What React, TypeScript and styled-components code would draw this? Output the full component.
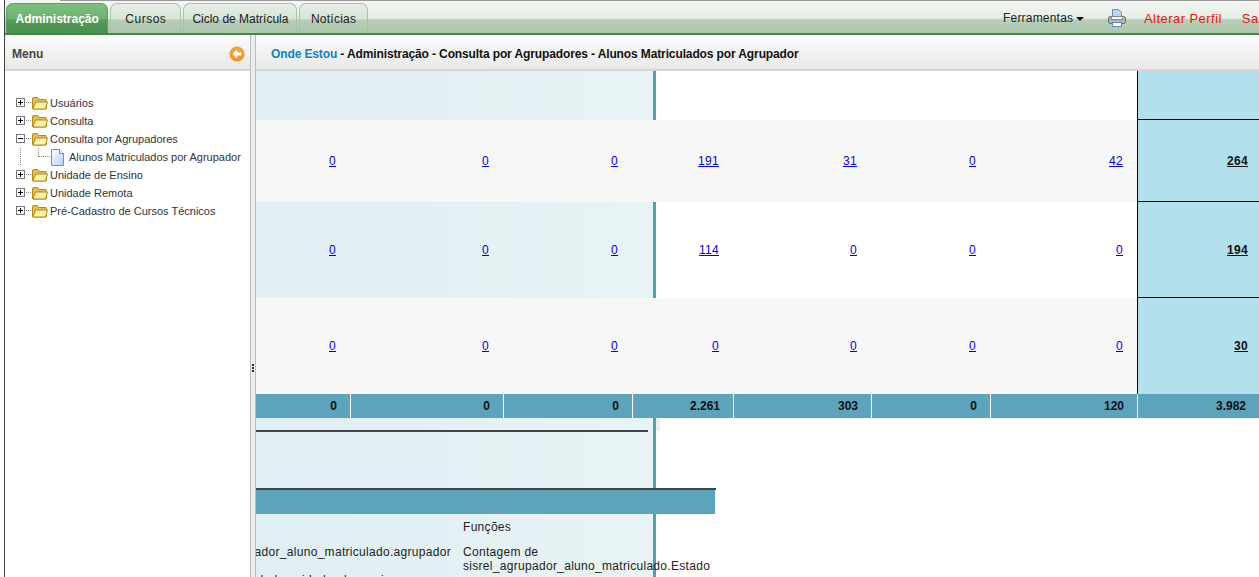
import React from "react";
import styled, { createGlobalStyle } from "styled-components";

const GlobalStyle = createGlobalStyle`
  html, body {
    margin: 0;
    padding: 0;
    height: 100%;
    overflow: hidden;
    background: #fff;
    font-family: "Liberation Sans", Arial, sans-serif;
    font-size: 11px;
    color: #222;
  }
`;

const Page = styled.div`
  width: 1259px;
  height: 577px;
  padding-left: 4px;
  box-sizing: border-box;
  display: flex;
  overflow: hidden;
`;

const Frame = styled.div`
  flex: 1;
  min-width: 0;
  display: flex;
  flex-direction: column;
  border-left: 1px solid #444;
`;

const TopBar = styled.div`
  height: 30px;
  flex: none;
  padding: 3px 0 0 1px;
  display: flex;
  align-items: stretch;
  gap: 2px;
  background:
    linear-gradient(to right, transparent 55px, #9a9a9a 55px) top / 100% 1px no-repeat,
    linear-gradient(#f4f7f3 0, #e6eee5 55%, #b9cfb8 60%, #aec6ae 100%);
  border-bottom: 2px solid #47834a;
`;

const Tab = styled.div<{ $active?: boolean; $pad: number; $track?: number }>`
  height: 30px;
  padding: 0 ${(p) => p.$pad}px;
  display: flex;
  align-items: center;
  border-radius: 7px 7px 0 0;
  border: 1px solid ${(p) => (p.$active ? "#5f9f62" : "#a9c0a9")};
  border-bottom: 0;
  box-sizing: border-box;
  font-size: 12px;
  letter-spacing: ${(p) => p.$track ?? 0}px;
  font-weight: ${(p) => (p.$active ? 700 : 400)};
  color: ${(p) => (p.$active ? "#fff" : "#222")};
  background: ${(p) =>
    p.$active
      ? "linear-gradient(#7ebf80 0, #6db170 50%, #549c59 56%, #488f4d 100%)"
      : "linear-gradient(#e6eee5 0, #d8e5d7 50%, #b7ceb6 56%, #aec6ae 100%)"};
`;

const TopActions = styled.div`
  margin-left: auto;
  display: flex;
  align-items: center;
  height: 30px;
  white-space: nowrap;
  width: 256px;
  overflow: hidden;
  flex: none;
`;

const ToolsMenu = styled.span`
  color: #222;
  font-size: 12px;
  letter-spacing: 0.2px;
  display: inline-flex;
  align-items: center;
  gap: 3px;
  width: 105px;
  flex: none;
`;

const Caret = styled.span`
  width: 0;
  height: 0;
  border-left: 4px solid transparent;
  border-right: 4px solid transparent;
  border-top: 4px solid #111;
  margin-top: 2px;
`;

const PrintIcon = styled.svg`
  width: 18px;
  height: 18px;
  flex: none;
  margin-right: 18px;
`;

const RedLink = styled.span`
  color: #f01010;
  font-size: 13px;
  letter-spacing: 0.45px;
  margin-right: 20px;
  flex: none;
`;

const Body = styled.div`
  flex: 1;
  min-height: 0;
  display: flex;
`;

const Sidebar = styled.aside`
  width: 245px;
  flex: none;
  display: flex;
  flex-direction: column;
  background: #fff;
`;

const PanelHeader = styled.div`
  height: 30px;
  padding-top: 4px;
  flex: none;
  border-bottom: 2px solid #d6d6d6;
  background: linear-gradient(#fbfbfb, #e9e9e9);
  display: flex;
  align-items: center;
`;

const SidebarHeader = styled(PanelHeader)`
  padding-left: 7px;
  padding-right: 5px;
  justify-content: space-between;
  font-size: 12px;
  font-weight: 700;
  color: #444;
`;

const BackIcon = styled.svg`
  width: 16px;
  height: 16px;
`;

const Tree = styled.ul`
  list-style: none;
  margin: 0;
  padding: 23px 0 0 11px;
`;

const TreeRow = styled.li`
  height: 18px;
  display: flex;
  align-items: center;
  font-size: 11px;
  color: #333;
  white-space: nowrap;
`;

const TreeIcon = styled.svg<{ $gap?: number }>`
  flex: none;
  display: block;
  margin-right: ${(p) => p.$gap ?? 0}px;
`;

const Splitter = styled.div`
  width: 6px;
  flex: none;
  box-sizing: border-box;
  background: #ececec;
  border-left: 1px solid #bdbdbd;
  border-right: 1px solid #bdbdbd;
  display: flex;
  align-items: center;
  justify-content: center;
`;

const Grip = styled.div`
  width: 2px;
  height: 8px;
  margin-top: 124px;
  background: repeating-linear-gradient(#333 0 2px, transparent 2px 3px);
`;

const Main = styled.main`
  flex: 1;
  min-width: 0;
  display: flex;
  flex-direction: column;
`;

const MainHeader = styled(PanelHeader)`
  padding-left: 15px;
  font-size: 12px;
  letter-spacing: -0.12px;
  font-weight: 700;
  color: #111;
  white-space: nowrap;
`;

const Crumb = styled.span`
  color: #0a84c8;
`;

const Content = styled.div`
  flex: 1;
  min-height: 0;
  overflow: hidden;
`;

const columns = "94px 153px 129px 101px 138px 119px 147px 1fr";

const tintBackground =
  "linear-gradient(to right, #e0eff4 0, #e3f0f3 150px, #e8f3f5 397px, #4f9fb5 397px, #4f9fb5 400px, #fff 400px)";

const Row = styled.div<{ $h: number; $band?: boolean }>`
  display: grid;
  grid-template-columns: ${columns};
  height: ${(p) => p.$h}px;
  background: ${(p) => (p.$band ? tintBackground : "#f7f7f7")};
`;

const Cell = styled.div`
  display: flex;
  align-items: center;
  justify-content: flex-end;
  padding-right: 14px;
  font-size: 12px;
  letter-spacing: 0.3px;
`;

const CountLink = styled.a`
  color: #0000ee;
  text-decoration: underline;
`;

const TotalCell = styled.div<{ $last?: boolean }>`
  background: #b2e1ed;
  border-left: 1px solid #000;
  border-bottom: ${(p) => (p.$last ? "0" : "1px solid #000")};
  display: flex;
  align-items: center;
  justify-content: flex-end;
  padding-right: 11px;
  font-size: 12px;
  font-weight: 700;
  letter-spacing: 0.3px;
  color: #111;
  text-decoration: underline;
  box-sizing: border-box;
`;

const FooterRow = styled.div`
  display: grid;
  grid-template-columns: ${columns};
  height: 24px;
  background: #5ba4bb;
`;

const FooterCell = styled.div<{ $first?: boolean }>`
  display: flex;
  align-items: center;
  justify-content: flex-end;
  padding-right: 13px;
  font-size: 12px;
  font-weight: 700;
  color: #111;
  border-left: ${(p) => (p.$first ? "0" : "1px solid #fff")};
`;

const Lower = styled.div`
  position: relative;
  height: 159px;
  background: ${tintBackground};
  padding-top: 12px;
  box-sizing: border-box;

  &::after {
    content: "";
    position: absolute;
    left: 400px;
    top: 0;
    width: 4px;
    height: 13px;
    background: #eee;
  }
`;

const ShortRule = styled.div`
  width: 392px;
  height: 2px;
  background: #444;
  margin-bottom: 56px;
`;

const BandRule = styled.div`
  width: 460px;
  height: 2px;
  background: #444;
`;

const BandTitle = styled.div`
  width: 459px;
  height: 24px;
  background: #5ba4bb;
`;

const DetailGrid = styled.div`
  display: grid;
  grid-template-columns: 207px auto;
  padding-top: 6px;
  font-size: 12px;
  letter-spacing: 0.3px;
  line-height: 14px;
  color: #222;
`;

const ClippedCell = styled.div<{ $inset?: number }>`
  display: flex;
  justify-content: flex-end;
  overflow: hidden;
  white-space: nowrap;
  padding-right: ${(p) => p.$inset ?? 12}px;
`;

const DetailCell = styled.div<{ $gap?: number }>`
  white-space: nowrap;
  padding-bottom: ${(p) => p.$gap ?? 0}px;
`;

const Plus = ({ minus }: { minus?: boolean }) => (
  <TreeIcon width="16" height="18" viewBox="0 0 16 18">
    <rect x="0.5" y="4.5" width="8" height="8" fill="#fff" stroke="#777" />
    <path d="M2 8.5h5" stroke="#000" />
    {!minus && <path d="M4.5 6v5" stroke="#000" />}
    <path d="M10 8.5h1M12 8.5h1M14 8.5h1" stroke="#888" />
  </TreeIcon>
);

const Folder = () => (
  <TreeIcon width="18" height="18" viewBox="0 0 18 18">
    <path d="M0.5 5v9q0 1 1 1h12q1 0 1-1V6.5q0-1-1-1H7L5.5 3.5h-4q-1 0-1 1.5z" fill="#e5bf4d" stroke="#b18a1e" />
    <path d="M1 15l2.5-7h12l-2 7z" fill="#fff2a8" stroke="#b18a1e" />
  </TreeIcon>
);

const Doc = () => (
  <TreeIcon width="13" height="17" viewBox="0 0 13 17" $gap={5}>
    <defs>
      <linearGradient id="docFill" x1="0" y1="0" x2="1" y2="1">
        <stop offset="0" stopColor="#fff" />
        <stop offset="1" stopColor="#b9ccf0" />
      </linearGradient>
    </defs>
    <path d="M0.5 0.5h8l4 4v12h-12z" fill="url(#docFill)" stroke="#6f8fc9" />
    <path d="M8.5 0.5v4h4" fill="#fff" stroke="#6f8fc9" />
  </TreeIcon>
);

const treeItems = ["Usuários", "Consulta"];

const treeItemsAfter = ["Unidade de Ensino", "Unidade Remota", "Pré-Cadastro de Cursos Técnicos"];

const rows = [
  { h: 82, band: false, values: ["0", "0", "0", "191", "31", "0", "42"], total: "264" },
  { h: 96, band: true, values: ["0", "0", "0", "114", "0", "0", "0"], total: "194" },
  { h: 96, band: false, values: ["0", "0", "0", "0", "0", "0", "0"], total: "30" },
];

const totals = ["0", "0", "0", "2.261", "303", "0", "120", "3.982"];

const App: React.FC = () => {
  return (
    <Page>
      <GlobalStyle />
      <Frame>
        <TopBar>
          <Tab $active $pad={8.5}>Administração</Tab>
          <Tab $pad={14} $track={0.5}>Cursos</Tab>
          <Tab $pad={8}>Ciclo de Matrícula</Tab>
          <Tab $pad={10.5} $track={0.25}>Notícias</Tab>
          <TopActions>
            <ToolsMenu>
              Ferramentas <Caret />
            </ToolsMenu>
            <PrintIcon viewBox="0 0 18 18">
              <path d="M4.5 0.5h6l3 3v6h-9z" fill="#bcd4f5" stroke="#5f8ad4" />
              <rect x="0.5" y="7.5" width="17" height="7" rx="2" fill="#b5b5b5" stroke="#666" />
              <rect x="3.5" y="7.5" width="11" height="3" fill="#f4f4f4" stroke="#888" />
              <rect x="4.5" y="13.5" width="9" height="4" fill="#fff" stroke="#5f8ad4" />
            </PrintIcon>
            <RedLink>Alterar Perfil</RedLink>
            <RedLink>Sair</RedLink>
          </TopActions>
        </TopBar>
        <Body>
          <Sidebar>
            <SidebarHeader>
              Menu
              <BackIcon viewBox="0 0 16 16">
                <defs>
                  <radialGradient id="orange" cx="0.5" cy="0.4" r="0.6">
                    <stop offset="0" stopColor="#fdb64c" />
                    <stop offset="1" stopColor="#f08a1d" />
                  </radialGradient>
                </defs>
                <circle cx="8" cy="8" r="7.5" fill="url(#orange)" />
                <path d="M8 3.6L3.6 8 8 12.4V9.6h4.5V6.4H8z" fill="#fff" />
              </BackIcon>
            </SidebarHeader>
            <Tree>
              {treeItems.map((item) => (
                <TreeRow key={item}>
                  <Plus />
                  <Folder />
                  {item}
                </TreeRow>
              ))}
              <TreeRow>
                <Plus minus />
                <Folder />
                Consulta por Agrupadores
              </TreeRow>
              <TreeRow>
                <TreeIcon width="35" height="18" viewBox="0 0 35 18">
                  <path d="M4.5 0v18" stroke="#888" strokeDasharray="1 1" />
                  <path d="M22.5 0v9M23 8.5h12" stroke="#888" strokeDasharray="1 1" />
                </TreeIcon>
                <Doc />
                Alunos Matriculados por Agrupador
              </TreeRow>
              {treeItemsAfter.map((item) => (
                <TreeRow key={item}>
                  <Plus />
                  <Folder />
                  {item}
                </TreeRow>
              ))}
            </Tree>
          </Sidebar>
          <Splitter>
            <Grip />
          </Splitter>
          <Main>
            <MainHeader>
              <Crumb>Onde Estou</Crumb>&nbsp;- Administração - Consulta por Agrupadores - Alunos Matriculados por Agrupador
            </MainHeader>
            <Content>
              <Row $h={49} $band>
                <div />
                <div />
                <div />
                <div />
                <div />
                <div />
                <div />
                <TotalCell />
              </Row>
              {rows.map((row, i) => (
                <Row key={i} $h={row.h} $band={row.band}>
                  {row.values.map((v, j) => (
                    <Cell key={j}>
                      <CountLink>{v}</CountLink>
                    </Cell>
                  ))}
                  <TotalCell $last={i === rows.length - 1}>{row.total}</TotalCell>
                </Row>
              ))}
              <FooterRow>
                {totals.map((v, i) => (
                  <FooterCell key={i} $first={i === 0}>
                    {v}
                  </FooterCell>
                ))}
              </FooterRow>
              <Lower>
                <ShortRule />
                <BandRule />
                <BandTitle />
                <DetailGrid>
                  <ClippedCell />
                  <DetailCell $gap={11}>Funções</DetailCell>
                  <ClippedCell>sisrel_agrupador_aluno_matriculado.agrupador</ClippedCell>
                  <DetailCell>
                    Contagem de
                    <br />
                    sisrel_agrupador_aluno_matriculado.Estado
                  </DetailCell>
                  <ClippedCell $inset={65}>sisrel_agrupador_aluno_matriculado.unidade_de_ensino</ClippedCell>
                </DetailGrid>
              </Lower>
            </Content>
          </Main>
        </Body>
      </Frame>
    </Page>
  );
};

export default App;
